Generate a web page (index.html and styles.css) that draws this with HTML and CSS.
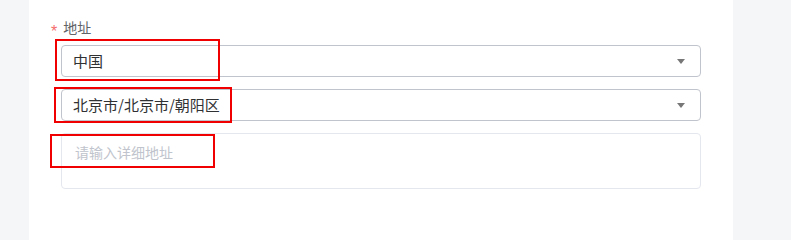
FILE: index.html
```html
<!DOCTYPE html>
<html lang="zh">
<head>
<meta charset="utf-8">
<link rel="stylesheet" href="styles.css">
</head>
<body>
<div class="page">
  <div class="side side-left"></div>
  <div class="panel">
    <div class="form-item">
      <div class="label"><span class="req">*</span>地址</div>
      <div class="controls">
        <div class="select">
          <span class="value">中国</span>
          <span class="arrow"></span>
        </div>
        <div class="select">
          <span class="value">北京市/北京市/朝阳区</span>
          <span class="arrow"></span>
        </div>
        <div class="textarea">
          <span class="placeholder">请输入详细地址</span>
        </div>
      </div>
    </div>
    <div class="mark mark-1"></div>
    <div class="mark mark-2"></div>
    <div class="mark mark-3"></div>
  </div>
  <div class="side side-right"></div>
</div>
</body>
</html>
```
FILE: styles.css
```css
html, body {
  margin: 0;
  padding: 0;
}
body {
  font-family: "Noto Sans CJK SC", "Noto Sans", sans-serif;
  font-size: 14px;
  background: #f5f6f8;
}
.page {
  display: flex;
  min-height: 100vh;
}
.side-left {
  width: 29px;
  background: #f5f6f8;
}
.side-right {
  flex: 1;
  background: #f5f6f8;
}
.panel {
  position: relative;
  width: 704px;
  background: #ffffff;
  padding: 17px 0 0 21px;
  box-sizing: border-box;
}
.label {
  height: 20px;
  line-height: 20px;
  color: #606266;
  font-size: 14px;
  margin-bottom: 8px;
}
.req {
  display: inline-block;
  line-height: 0;
  color: #f56c6c;
  margin-right: 6px;
  margin-left: 1px;
  font-family: "Liberation Sans", sans-serif;
  font-size: 16px;
  vertical-align: -4px;
}
.controls {
  margin-left: 11px;
  width: 640px;
  display: flex;
  flex-direction: column;
  gap: 12px;
}
.select {
  height: 32px;
  box-sizing: border-box;
  border: 1px solid #c0c4cc;
  border-radius: 4px;
  display: flex;
  align-items: center;
  justify-content: space-between;
  padding: 0 15px 0 11px;
  color: #303133;
}
.value {
  line-height: 20px;
  font-size: 15px;
}
.arrow {
  width: 0;
  height: 0;
  border-left: 4px solid transparent;
  border-right: 4px solid transparent;
  border-top: 5px solid #777777;
}
.textarea {
  height: 56px;
  box-sizing: border-box;
  border: 1px solid #e4e7ed;
  border-radius: 4px;
  padding: 8px 13px;
}
.placeholder {
  line-height: 20px;
  color: #c0c4cc;
}
.mark {
  position: absolute;
  border: 2px solid #f00000;
  box-sizing: border-box;
}
.mark-1 {
  left: 26px;
  top: 39px;
  width: 165px;
  height: 42px;
}
.mark-2 {
  left: 25px;
  top: 87px;
  width: 178px;
  height: 36px;
}
.mark-3 {
  left: 21px;
  top: 134px;
  width: 165px;
  height: 34px;
}
```
